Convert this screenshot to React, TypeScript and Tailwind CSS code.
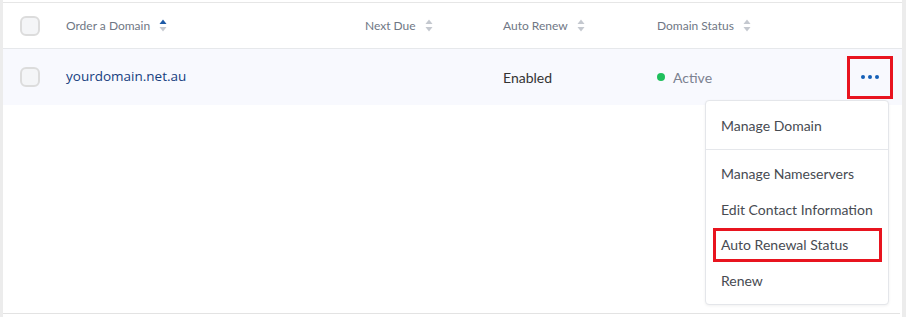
import React from "react";

const SortIcon: React.FC<{ active?: boolean }> = ({ active }) => (
  <svg width="8" height="13" viewBox="0 0 8 13" className="ml-[9px]">
    <path d="M4 0.5 L7.5 5 L0.5 5 Z" fill={active ? "#1d5aa6" : "#c4c8cf"} />
    <path d="M4 12.5 L7.5 8 L0.5 8 Z" fill="#c4c8cf" />
  </svg>
);

const Checkbox: React.FC = () => (
  <div className="w-[20px] h-[20px] rounded-[6px] border-2 border-[#dcdcdc] bg-[#f4f5f7]" />
);

const menuItems = ["Manage Nameservers", "Edit Contact Information", "Auto Renewal Status", "Renew"];

const App: React.FC = () => {
  return (
    <div className="flex h-[317px] w-[906px] bg-white" style={{ fontFamily: "Lato, 'Open Sans', sans-serif" }}>
      <div className="w-[3px] bg-[#ececec]" />
      <div className="relative flex-1 flex flex-col">
        <div className="h-[2px] bg-white" />
        <div className="h-px bg-[#e6e6e6]" />
        {/* header */}
        <div className="flex items-center h-[46px] border-b border-[#e6e8eb] text-[12px] text-[#6f7785]">
          <div className="w-[63px] pl-[17px]"><Checkbox /></div>
          <div className="w-[299px] flex items-center">Order a Domain<SortIcon active /></div>
          <div className="w-[138px] flex items-center">Next Due<SortIcon /></div>
          <div className="w-[154px] flex items-center">Auto Renew<SortIcon /></div>
          <div className="flex items-center">Domain Status<SortIcon /></div>
        </div>
        {/* row */}
        <div className="flex items-center h-[56px] bg-[#f8f9fe] text-[14px]">
          <div className="w-[63px] pl-[17px]"><Checkbox /></div>
          <div className="w-[299px] -mt-[3px]">
            <span className="font-medium text-[13.5px] text-[#16407e]" style={{ fontFamily: "'Open Sans', sans-serif" }}>
              yourdomain.net.au
            </span>
          </div>
          <div className="w-[138px]" />
          <div className="w-[154px] text-[#333]">Enabled</div>
          <div className="flex items-center text-[#7b8190]">
            <span className="w-[8px] h-[8px] rounded-full bg-[#1fbf5c] mr-[8px]" />
            Active
          </div>
          <div className="ml-auto mr-[9px] w-[46px] h-[43px] border-[3px] border-[#e8141f] flex items-center justify-center gap-[3px]">
            <span className="w-[4px] h-[4px] rounded-full bg-[#1560b8]" />
            <span className="w-[4px] h-[4px] rounded-full bg-[#1560b8]" />
            <span className="w-[4px] h-[4px] rounded-full bg-[#1560b8]" />
          </div>
        </div>
        <div className="flex-1" />
        <div className="h-px bg-[#e3e3e3] mr-[2px] mb-[3px]" />

        {/* dropdown menu */}
        <div className="absolute left-[702px] top-[100px] w-[184px] bg-white border border-[#e4e6ea] rounded-[4px] shadow-[0_1px_3px_rgba(0,0,0,0.06)] py-[6px] text-[14px] text-[#474b52]">
          <div className="h-[36px] flex items-center px-[15px]">Manage Domain</div>
          <div className="my-[6px] h-px bg-[#e5e7eb]" />
          {menuItems.map((item) => (
            <div key={item} className="relative h-[35.5px] flex items-center px-[15px]">
              {item === "Auto Renewal Status" && (
                <div className="absolute left-[7px] right-[6px] top-[1px] h-[34px] border-[3px] border-[#e8141f]" />
              )}
              <span className="relative">{item}</span>
            </div>
          ))}
        </div>
      </div>
      <div className="w-[4px] bg-[#ececec]" />
    </div>
  );
};

export default App;
